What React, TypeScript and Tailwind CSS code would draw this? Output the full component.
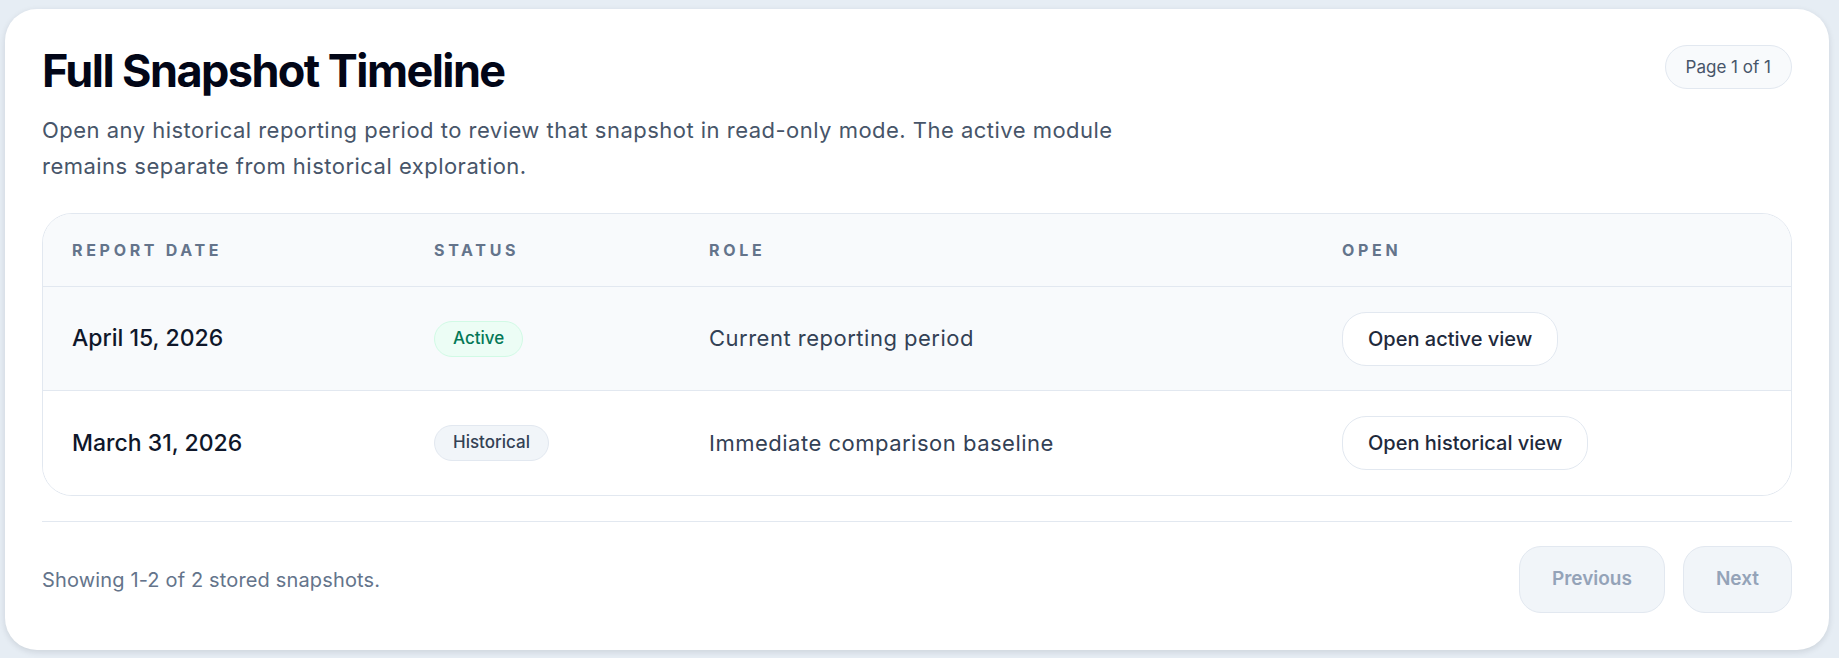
const snapshots = [
  {
    date: 'April 15, 2026',
    status: 'Active',
    role: 'Current reporting period',
    action: 'Open active view',
    current: true,
  },
  {
    date: 'March 31, 2026',
    status: 'Historical',
    role: 'Immediate comparison baseline',
    action: 'Open historical view',
    current: false,
  },
]

const cols = 'grid grid-cols-[361px_275px_633px_1fr]'

export default function App() {
  return (
    <div className="min-h-screen bg-[#e6edf4] pt-[9px] pl-[5px] pr-[10px] font-[family-name:Inter,sans-serif]">
      <section className="w-[1824px] rounded-[32px] bg-white px-[37px] pt-[36px] pb-[37px] shadow-[0_2px_6px_rgba(15,23,42,0.12)]">
        {/* Header */}
        <div className="flex items-start justify-between">
          <div>
            <h1 className="text-[45px] leading-[52px] font-bold tracking-[-0.035em] text-[#020617]">
              Full Snapshot Timeline
            </h1>
            <p className="mt-[15px] max-w-[1120px] text-[22px] leading-[36px] tracking-[0.48px] text-[#475569]">
              Open any historical reporting period to review that snapshot in read-only mode. The active module
              remains separate from historical exploration.
            </p>
          </div>
          <span className="rounded-full border border-[#e2e8f0] bg-[#f8fafc] px-[20px] py-[9px] text-[17px] leading-6 text-[#475569]">
            Page 1 of 1
          </span>
        </div>

        {/* Table */}
        <div className="mt-[29px] overflow-hidden rounded-[30px] border border-[#e2e8f0]">
          <div className={`${cols} h-[73px] items-center border-b border-[#e2e8f0] bg-[#f8fafc] text-base font-bold tracking-[0.23em] text-[#64748b]`}>
            <div className="px-[29px]">REPORT DATE</div>
            <div className="px-[30px]">STATUS</div>
            <div className="px-[30px]">ROLE</div>
            <div className="px-[30px]">OPEN</div>
          </div>
          {snapshots.map((s, i) => (
            <div
              key={s.date}
              className={`${cols} h-[104px] items-center ${s.current ? 'bg-[#f8fafc]' : 'bg-white'} ${
                i < snapshots.length - 1 ? 'border-b border-[#e2e8f0]' : ''
              }`}
            >
              <div className="px-[29px] text-[23px] font-medium text-[#0f172a]">{s.date}</div>
              <div className="px-[30px]">
                {s.current ? (
                  <span className="inline-flex h-[36px] items-center rounded-full border border-[#d1fae5] bg-[#ecfdf5] px-[18px] text-[17px] font-medium text-[#047857]">
                    {s.status}
                  </span>
                ) : (
                  <span className="inline-flex h-[36px] items-center rounded-full border border-[#e2e8f0] bg-[#f1f5f9] px-[18px] text-[17px] font-medium text-[#334155]">
                    {s.status}
                  </span>
                )}
              </div>
              <div className="px-[30px] text-[22px] tracking-[0.5px] text-[#334155]">{s.role}</div>
              <div className="px-[30px]">
                <button className="h-[54px] rounded-[24px] border border-[#e2e8f0] bg-white px-[25px] text-[20px] font-medium text-[#1e293b]">
                  {s.action}
                </button>
              </div>
            </div>
          ))}
        </div>

        {/* Footer */}
        <div className="mt-[25px] flex items-center justify-between border-t border-[#e2e8f0] pt-[24px]">
          <p className="text-[20px] tracking-[0.15px] text-[#64748b]">Showing 1-2 of 2 stored snapshots.</p>
          <div className="flex gap-[18px]">
            <button disabled className="h-[67px] rounded-[22px] border border-[#e2e8f0] bg-[#f1f5f9] px-[32px] text-[19px] font-semibold text-[#94a3b8]">
              Previous
            </button>
            <button disabled className="h-[67px] rounded-[22px] border border-[#e2e8f0] bg-[#f1f5f9] px-[32px] text-[19px] font-semibold text-[#94a3b8]">
              Next
            </button>
          </div>
        </div>
      </section>
    </div>
  )
}
